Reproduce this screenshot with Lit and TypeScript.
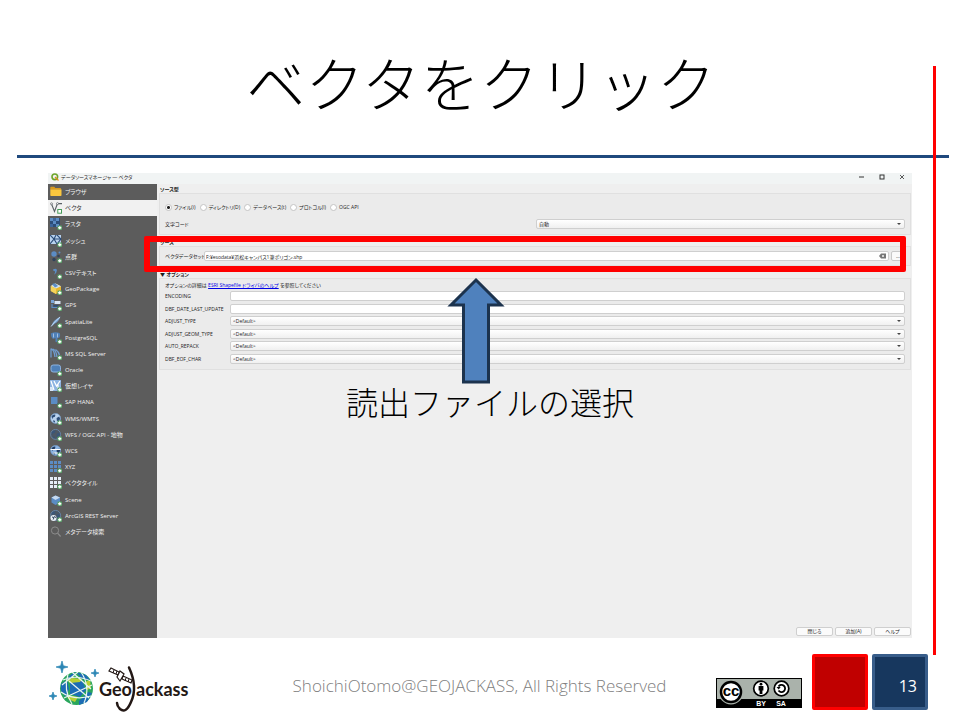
import { LitElement, html, svg, css } from "lit";
import { customElement, state } from "lit/decorators.js";
import { classMap } from "lit/directives/class-map.js";

const plus = svg`<rect x="7.500" y="7.500" width="4.500" height="4.500" rx="1" fill="#5aa56a"/><path d="M9.750 8.200v3.100M8.200 9.750h3.100" stroke="#fff" stroke-width="1.300"/>`;

const globe = (fill: string, line: string) => svg`
  <circle cx="5.600" cy="5.400" r="5" fill=${fill}/>
  <path d="M1.500 3.200q2-2.400 4-1.400l-.6 2-2 .8-.6 1.600zM6.600 5l2.600-1.400 1 2.400-1.800 2.400-1.600-1zM3 7.200l1.800.6.4 1.800-1.600-.4z" fill=${line}/>
  <circle cx="5.600" cy="5.400" r="5" fill="none" stroke="#6f9dd0" stroke-width=".6"/>`;

const dots = (fill: string) =>
  [0, 4, 8].map((y) => [0, 4, 8].map((x) => svg`<rect x=${x} y=${y} width="3" height="3" fill=${fill}/>`));

const icons: Record<string, unknown> = {
  folder: svg`<path d="M.3 1.500q0-.8.8-.8h3.200l1 1.300h5q.8 0 .8.8v1H.3z" fill="#d79a1e"/><path d="M.3 3.600h11.200v5.600q0 .8-.8.8H1.100q-.8 0-.8-.8z" fill="#fbc73e"/>`,
  vector: svg`<path d="M1.500 2 4.500 9.500 7.500 1.600H12" fill="none" stroke="#5a6066" stroke-width="1.100"/><circle cx="1.500" cy="1.800" r="1" fill="#fff" stroke="#5a6066" stroke-width=".7"/><circle cx="7.500" cy="1.600" r="1" fill="#fff" stroke="#5a6066" stroke-width=".7"/><rect x="7.800" y="7.500" width="3.700" height="3.700" fill="#fff" stroke="#459a58" stroke-width="1"/>`,
  raster: svg`<rect x="0" y="0" width="10" height="9" fill="#2c4d78"/><path d="M0 0h3v3H0zM6 0h3v3H6zM3 3h3v3H3zM6 6h3v3H6z" fill="#5b8cc4"/><path d="M3 0h3v3H3zM0 6h3v3H0z" fill="#3d669b"/>${plus}`,
  mesh: svg`<rect x="0" y="0" width="11" height="9" fill="#b9d2ee"/><path d="M0 0 4 4 0 9M4 4 6 0M4 4l3 5M4 4h7M7 0l4 4-4 5" fill="none" stroke="#2c4d78" stroke-width="1.100"/>${plus}`,
  points: svg`<circle cx="4" cy="3" r="2.700" fill="#5b8cc4"/><circle cx="8.500" cy="5" r="1.300" fill="#30435c"/><circle cx="4" cy="8.500" r="1.700" fill="#30435c"/><circle cx="9.500" cy="1.500" r="1" fill="#5b8cc4"/>${plus}`,
  comma: svg`<path d="M3 2.500q3-2 4 .6 0 3-3 4.600 1.400-2 1-3.400-2 .2-2-1.800z" fill="#5b8cc4"/>${plus}`,
  pack: svg`<path d="m5.500.5 5.500 2.800v5L6 11 .8 8V3z" fill="#e8b82f"/><path d="m5.500.5 5.500 2.800-5 2.200L.8 3z" fill="#cfe0f3"/><path d="M6 5.500V11L.8 8V3z" fill="#f4d35b"/><path d="m2 1 3-.8L8 3 5 4.500z" fill="#5b8cc4"/>${plus}`,
  gps: svg`<rect x="1" y="1" width="3" height="3" fill="#7aa6d8"/><rect x="4.500" y="2" width="6" height="3" fill="#d8e6f5"/><path d="M2 5v3.500h5" fill="none" stroke="#5b8cc4" stroke-width="1.200"/><rect x="3.500" y="6" width="5" height="1.600" fill="#2c4d78"/>${plus}`,
  feather: svg`<path d="M1 10.500Q3 4 10.500.5 9 5.500 4.500 7.800L2 10z" fill="#7aa6d8"/><path d="M1 10.500Q5 5 10 1" fill="none" stroke="#d8e6f5" stroke-width=".7"/>${plus}`,
  elephant: svg`<path d="M.8 1.500Q5-.8 9.500 1q1.500 2.500-.5 5L7.500 5.500V9.500q-1.500 1.500-2 0V6L3 7Q.8 5 .8 1.500z" fill="#4f80b8"/><path d="M3.500 1.500v4M7.500 1.500v4" stroke="#c5d9f0" stroke-width=".7"/>${plus}`,
  mssql: svg`<path d="M1 .5v9M1 1q3 0 4 8M3 1q3 1 4 8M5.500 1.500q3 2 4 5.500" fill="none" stroke="#6f9dd0" stroke-width="1.300"/>${plus}`,
  oracle: svg`<rect x="1" y="1" width="9.500" height="7" rx="2.200" fill="#4f80b8" stroke="#8db4e2"/>${plus}`,
  virtual: svg`<rect x="0" y="0" width="11" height="11" fill="#8db4e2"/><path d="M1 1 4 10M4 1 6.500 6 10 1M8 4v5" fill="none" stroke="#fff" stroke-width="1.200"/><path d="M0 7h3v4H0z" fill="#d8e6f5"/>${plus}`,
  hana: svg`<rect x="1" y="1" width="6.500" height="7" fill="#5b8cc4"/><path d="M7.500 8h3" stroke="#30435c" stroke-width="1.500"/>${plus}`,
  wms: svg`${globe("#b9d2ee", "#2c4d78")}${plus}`,
  wfs: svg`${globe("#4c5866", "#3a5578")}${plus}`,
  wcs: svg`${globe("#8db4e2", "#1f3a60")}<path d="M.5 4.500h10M3 8h5" stroke="#fff"/>${plus}`,
  xyz: svg`${dots("#5b8cc4")}${plus}`,
  tile: svg`${dots("#e6eef8")}${plus}`,
  scene: svg`<path d="m5.500 1.500 4.500 2v5L5.500 11 1.500 8.500v-5z" fill="#5b8cc4"/><path d="m5.500 1.500 4.500 2L5.500 6l-4-2.500z" fill="#c5d9f0"/>${plus}`,
  arcgis: svg`${globe("#4c5866", "#3a5578")}<circle cx="3.500" cy="8" r="3" fill="#e8eef5"/><path d="M2 7l2 .5-.8 2M4.500 6l1 2" stroke="#30435c" fill="none"/>${plus}`,
  search: svg`<circle cx="5" cy="4.500" r="3.600" fill="none" stroke="#8c8c8c" stroke-width="1"/><path d="m7.600 7.200 3 3.300" stroke="#8c8c8c" stroke-width="1.200"/>`,
};

const sources: [string, string][] = [
  ["folder", "ブラウザ"], ["vector", "ベクタ"], ["raster", "ラスタ"], ["mesh", "メッシュ"],
  ["points", "点群"], ["comma", "CSVテキスト"], ["pack", "GeoPackage"], ["gps", "GPS"],
  ["feather", "SpatiaLite"], ["elephant", "PostgreSQL"], ["mssql", "MS SQL Server"], ["oracle", "Oracle"],
  ["virtual", "仮想レイヤ"], ["hana", "SAP HANA"], ["wms", "WMS/WMTS"], ["wfs", "WFS / OGC API - 地物"],
  ["wcs", "WCS"], ["xyz", "XYZ"], ["tile", "ベクタタイル"], ["scene", "Scene"],
  ["arcgis", "ArcGIS REST Server"], ["search", "メタデータ検索"],
];

@customElement("source-dialog")
class SourceDialog extends LitElement {
  @state() selected = "vector";

  static styles = css`
    :host { display: flex; flex-direction: column; background: #efefef; color: #1c1c1c;
      font: 400 5px/8px "Open Sans", "Noto Sans CJK JP", sans-serif; font-feature-settings: "palt"; }
    * { box-sizing: border-box; }
    button, input, select { font: inherit; color: inherit; margin: 0; font-feature-settings: inherit; }
    .titlebar { display: flex; align-items: center; height: 11px; padding: 0 6px 3px 3px; background: #f1f4f4; gap: 2px; }
    .titlebar svg { width: 8px; height: 8px; }
    .caption { flex: 1; }
    .winbtn { display: flex; padding: 0; border: 0; background: none; margin-left: 10px; }
    .body { display: flex; flex: 1; }
    .side { width: 109px; background: #5c5c5c; }
    .list { display: grid; grid-auto-rows: 1fr; height: 356px; margin: 0; padding: 0; list-style: none; }
    .item { display: flex; align-items: center; gap: 3px; width: 100%; height: 100%; padding: 0 0 0 2px;
      border: 0; background: none; color: #f2f2f2; font-size: 6px; text-align: left; white-space: nowrap; }
    .item svg { width: 12px; height: 12px; }
    .on { background: #f1f1f1; color: #333; }
    .main { flex: 1; display: flex; flex-direction: column; min-width: 0; padding: 1px 1px 2px 2px; }
    .head { margin: 0; height: 8px; padding-left: 1px; font-size: 5px; line-height: 8px; font-weight: 700; }
    .group { border: 1px solid #e0e0e0; background: #ebebeb; padding: 0 5px; margin: 0; }
    .kind { height: 42px; padding-top: 8px; }
    .radios { display: flex; gap: 4px; height: 10px; align-items: center; }
    .radios label { display: flex; align-items: center; gap: 2px; }
    .radio { appearance: none; width: 7px; height: 7px; border: 1px solid #c4c4c4; border-radius: 50%; background: #fff; }
    .radio:checked { background: radial-gradient(circle, #222 0 1px, #fff 2px); }
    .encoding { display: flex; align-items: center; justify-content: space-between; margin-top: 7px; height: 10px; }
    .encoding .pick { width: 369px; }
    .pick { position: relative; display: flex; min-width: 0; }
    .pick::after { content: ""; position: absolute; right: 4px; top: 4px; border: 2px solid transparent; border-top-color: #444; border-bottom: 0; }
    select, .text { appearance: none; width: 100%; height: 10px; padding: 0 2px; border: 1px solid #cfcfcf; border-radius: 2px; line-height: 8px; }
    select { background: linear-gradient(#fff, #f0f0f0); }
    .text { background: #fff; }
    .sethead { margin-top: 3px; }
    .set { position: relative; display: flex; align-items: center; gap: 2px; height: 20px; }
    .set label { width: 37px; white-space: nowrap; }
    .path { position: relative; flex: 1; display: flex; }
    .path .text { padding-left: 1px; }
    .clear { position: absolute; right: 3px; top: 2px; width: 7px; height: 6px; padding: 0; border: 0; background: none; display: flex; }
    .more { width: 14px; height: 10px; padding: 0; border: 1px solid #c8c8c8; border-radius: 2px; background: #fafafa; line-height: 6px; }
    .frame { position: absolute; left: -16px; right: 4px; top: -11px; height: 36px; border: 6px solid #f00; border-radius: 2px; pointer-events: none; }
    .opthead { margin-top: 4px; }
    .options { height: 92px; padding-top: 3px; }
    .help { margin: 0; height: 8px; line-height: 7px; }
    .help a { color: #0000e6; }
    .fields { display: grid; grid-template-columns: 65px 1fr; grid-auto-rows: 1fr; align-items: center; height: 75px; }
    .fields label { white-space: nowrap; }
    .actions { display: flex; justify-content: flex-end; gap: 2px; margin-top: auto; }
    .act { width: 37px; height: 9px; padding: 0; border: 1px solid #cfcfcf; border-radius: 2px; background: #fbfbfb; line-height: 7px; }
  `;

  private field(name: string, type: "text" | "select") {
    return html`<label for=${name}>${name}</label>
      ${type === "text"
        ? html`<input class="text" id=${name} type="text">`
        : html`<span class="pick"><select id=${name}><option>&lt;Default&gt;</option></select></span>`}`;
  }

  render() {
    return html`
      <header class="titlebar">
        <svg viewBox="0 0 8 8"><circle cx="3.800" cy="3.800" r="2.800" fill="none" stroke="#6fa52c" stroke-width="1.600"/><path d="m4 4 3.500 3.500" stroke="#e08a1e" stroke-width="1.300"/></svg>
        <span class="caption">データソースマネージャ — ベクタ</span>
        <button class="winbtn" aria-label="最小化"><svg viewBox="0 0 8 8"><path d="M1 4h5" stroke="#333" stroke-width="1"/></svg></button>
        <button class="winbtn" aria-label="最大化"><svg viewBox="0 0 8 8"><rect x="2" y="2" width="4" height="4" fill="none" stroke="#333" stroke-width="1"/></svg></button>
        <button class="winbtn" aria-label="ウィンドウを閉じる"><svg viewBox="0 0 8 8"><path d="m2 2 4 4M6 2 2 6" stroke="#333" stroke-width=".8"/></svg></button>
      </header>
      <div class="body">
        <nav class="side"><ul class="list">
          ${sources.map(([id, name]) => html`<li>
            <button class=${classMap({ item: true, on: id === this.selected })} @click=${() => (this.selected = id)}>
              <svg viewBox="0 0 12 12">${icons[id]}</svg>${name}
            </button></li>`)}
        </ul></nav>
        <section class="main">
          <h2 class="head">ソース型</h2>
          <div class="group kind">
            <div class="radios">
              ${["ファイル(i)", "ディレクトリ(D)", "データベース(t)", "プロトコル(l)", "OGC API"].map((name, i) => html`
                <label><input class="radio" type="radio" name="kind" ?checked=${i === 0}>${name}</label>`)}
            </div>
            <div class="encoding"><label for="enc">文字コード</label>
              <span class="pick"><select id="enc"><option>自動</option></select></span></div>
          </div>
          <h2 class="head sethead">ソース</h2>
          <div class="group set">
            <label for="path">ベクタデータセット</label>
            <span class="path"><input class="text" id="path" type="text" value="F:¥esodata¥浜松キャンパス1筆ポリゴン.shp">
              <button class="clear" aria-label="消去"><svg viewBox="0 0 7 6"><path d="M0 3 2 .5h5v5H2z" fill="#777"/><path d="m3 2 2 2M5 2 3 4" stroke="#fff" stroke-width=".7"/></svg></button></span>
            <button class="more">…</button>
            <div class="frame"></div>
          </div>
          <h2 class="head opthead">▼ オプション</h2>
          <div class="group options">
            <p class="help">オプションの詳細は <a href="#help">ESRI Shapefile ドライバのヘルプ</a> を参照してください</p>
            <div class="fields">
              ${this.field("ENCODING", "text")}
              ${this.field("DBF_DATE_LAST_UPDATE", "text")}
              ${this.field("ADJUST_TYPE", "select")}
              ${this.field("ADJUST_GEOM_TYPE", "select")}
              ${this.field("AUTO_REPACK", "select")}
              ${this.field("DBF_EOF_CHAR", "select")}
            </div>
          </div>
          <div class="actions">
            <button class="act">閉じる</button><button class="act">追加(A)</button><button class="act">ヘルプ</button>
          </div>
        </section>
      </div>`;
  }
}

@customElement("app-root")
class AppRoot extends LitElement {
  static styles = css`
    :host { display: block; font-family: "Noto Sans CJK JP", sans-serif; font-weight: 300; color: #000; background: #fff; }
    * { box-sizing: border-box; }
    .slide { position: relative; display: flex; flex-direction: column; min-height: 100vh; overflow: hidden; }
    .title { margin: 0; height: 155px; padding: 39px 0 0 2px; font-size: 59px; line-height: 86px; font-weight: 300; text-align: center; }
    .rule { height: 3px; margin: 0 11px 0 17px; background: #1f497d; }
    .redline { position: absolute; right: 24px; top: 66px; bottom: 65px; width: 3px; background: #f00; }
    .figure { position: relative; margin: 15px 48px 0; }
    source-dialog { min-height: 465px; }
    .callout { position: absolute; left: 0; right: 8px; top: 104px; display: flex; flex-direction: column; align-items: center; pointer-events: none; }
    .arrow { width: 58px; height: 108px; }
    .note { margin: 0; padding-left: 28px; font-size: 32px; line-height: 32px; }
    .foot { display: flex; align-items: flex-start; margin: 16px 32px 0 48px; }
    .logo { width: 144px; height: 60px; }
    .rights { flex: 1; margin: 0; padding: 20px 0 0 51px; text-align: center; white-space: nowrap; font: 300 17px/24px "Open Sans", sans-serif; color: #808080; }
    .cc { width: 86px; height: 30px; margin: 24px 10px 0 0; }
    .box { width: 56px; height: 56px; border: 3px solid #f00; border-radius: 2px; background: #c00000; }
    .page { margin-left: 4px; border-color: #385d8a; background: #17375e; color: #fff; padding: 17px 8px 0 0; font: 400 16px/24px "Open Sans", sans-serif; text-align: right; }
    .brand { font: 700 18px "Lato", sans-serif; }
    .tag { font: 700 7px "Liberation Sans", sans-serif; }
    .ccmark { font: 700 15px "Liberation Sans", sans-serif; }
  `;

  render() {
    return html`
      <article class="slide">
        <h1 class="title">ベクタをクリック</h1>
        <div class="rule"></div>
        <div class="redline"></div>
        <div class="figure">
          <source-dialog></source-dialog>
          <div class="callout">
            <svg class="arrow" viewBox="0 0 58 108"><path d="M29 3 54 28H41.500v77H16.500V28H4z" fill="#4f81bd" stroke="#1c334e" stroke-width="3"/></svg>
            <p class="note">読出ファイルの選択</p>
          </div>
        </div>
        <footer class="foot">
          <svg class="logo" viewBox="0 0 144 60" role="img" aria-label="GeoJackass">
            <path d="m14 7 1.300 4.700L20 13l-4.700 1.300L14 19l-1.300-4.700L8 13l4.700-1.300zM47 15l1 3.200 3 .8-3 1-1 3-1-3-3-1 3-.8zM5 38l1 3 3 1-3 1-1 3-1-3-3-1 3-1z" fill="#2d86b5" stroke="#2d86b5" stroke-width=".7"/>
            <circle cx="28.500" cy="34.500" r="16.500" fill="#29a65c"/>
            <path d="m22 28 12-2 4 10-6 7-10-3zM28 18l10 3 4 5-8-1zM13 30l6-4 2 9-3 8-5-6zM31 47l9-9 4 1-5 9-8 3zM22 21l5-3-3 7-5 1z" fill="#1c6cb5"/>
            <path d="m19 26 5-2 10 1-2 3-10 1zM37 28l5-2 1 8-4 2zM19 41l11 2-3 5-7-3z" fill="#b7cf35"/>
            <path d="M15 26Q27 20 43 27M13 38Q26 47 43 42M20 20Q15 36 24 50M33 18Q43 33 36 49M14 31 30 18M16 44 44 31M21 27 41 44M24 18 43 35" fill="none" stroke="#e7f4ee" stroke-width="1.200"/>
            <text class="brand" x="51" y="42" fill="#231815">Geo</text>
            <text class="brand" x="88" y="42" fill="#231815">ackass</text>
            <path d="M81 13.500Q90 33 83 48 78 60 72 55 69 52 69 49" fill="none" stroke="#231815" stroke-width="2.500" stroke-linecap="round"/>
            <path d="m63 14 8 4-1 3-9-4zM75 22l9 4-1 3-9-4zM72 17l4 3-4 7-3-4z" fill="#fff" stroke="#231815" stroke-width="1.200"/>
            <path d="m66 16-1 3M69 17l-1 3M78 24l-1 3M81 25l-1 3" stroke="#231815"/>
          </svg>
          <p class="rights">ShoichiOtomo@GEOJACKASS, All Rights Reserved</p>
          <svg class="cc" viewBox="0 0 86 30" role="img" aria-label="CC BY-SA">
            <path d="M0 0h86v30H0z" fill="#000"/><path d="M1 1h84v20H1z" fill="#aab2ab"/>
            <circle cx="15" cy="14" r="12.500" fill="#aab2ab"/>
            <circle cx="15" cy="14" r="10" fill="#fff" stroke="#000" stroke-width="2.500"/>
            <text class="ccmark" x="15" y="18" text-anchor="middle">cc</text>
            <circle cx="45" cy="10.500" r="7.300" fill="#fff" stroke="#000" stroke-width="1.700"/>
            <circle cx="45" cy="6.200" r="1.400"/><path d="M42.600 8h4.800v4.500h-1V16h-2.800v-3.500h-1z"/>
            <circle cx="65.500" cy="10.500" r="7.300" fill="#fff" stroke="#000" stroke-width="1.700"/>
            <path d="M62.500 8.500a3.600 3.600 0 1 1 0 4" fill="none" stroke="#000" stroke-width="1.800"/><path d="M60.500 9h4.200l-2 2.500z"/>
            <text class="tag" x="45" y="28" text-anchor="middle" fill="#fff">BY</text>
            <text class="tag" x="65" y="28" text-anchor="middle" fill="#fff">SA</text>
          </svg>
          <div class="box"></div>
          <div class="box page">13</div>
        </footer>
      </article>`;
  }
}
